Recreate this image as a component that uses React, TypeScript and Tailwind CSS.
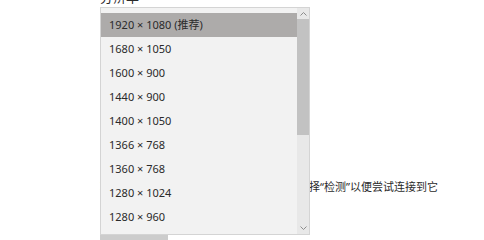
import React from "react";

const rows = [
  "1920 × 1080 (推荐)",
  "1680 × 1050",
  "1600 × 900",
  "1440 × 900",
  "1400 × 1050",
  "1366 × 768",
  "1360 × 768",
  "1280 × 1024",
  "1280 × 960",
];

const font = {
  fontFamily: '"Noto Sans", "Noto Sans CJK SC", sans-serif',
};

export default function App() {
  return (
    <div
      className="relative w-[484px] h-[240px] overflow-hidden bg-white text-[#2b2b2b]"
      style={font}
    >
      <div className="flex flex-col pl-[100px]">
        <div className="-mt-[11px] h-[16px] text-[13px] leading-[16px]">分辨率</div>
        <div className="h-[174px]" />
        <div className="h-[16px] text-[11px] leading-[16px] whitespace-nowrap">
          较旧的显示器可能不会总是自动连接。请选择“检测”以便尝试连接到它
        </div>
        <div className="h-[30px]" />
        <div className="w-[68px] h-[32px] bg-[#cccccc]" />
      </div>

      <div className="absolute left-[100px] top-[7px] w-[210px] h-[228px] bg-[#f2f2f2] border border-[#d4d4d4] flex">
        <div className="flex-1 flex flex-col pt-[5px]">
          {rows.map((r, i) => (
            <div
              key={r}
              className={
                "h-[24px] flex items-center pl-[8px] text-[11px] text-[#2a2a2a] " +
                (i === 0 ? "bg-[#adabaa]" : "")
              }
            >
              {r}
            </div>
          ))}
        </div>
        <div className="w-[12px] flex flex-col bg-[#e8e8e8]">
          <div className="h-[11px] flex items-center justify-center">
            <svg width="7" height="4" viewBox="0 0 7 4">
              <path d="M0.5 3.5 L3.5 0.5 L6.5 3.5" fill="none" stroke="#8c8c8c" strokeWidth="1" />
            </svg>
          </div>
          <div className="h-[116px] bg-[#c2c2c2]" />
          <div className="flex-1" />
          <div className="h-[12px] flex items-center justify-center">
            <svg width="7" height="4" viewBox="0 0 7 4">
              <path d="M0.5 0.5 L3.5 3.5 L6.5 0.5" fill="none" stroke="#8c8c8c" strokeWidth="1" />
            </svg>
          </div>
        </div>
      </div>
    </div>
  );
}
